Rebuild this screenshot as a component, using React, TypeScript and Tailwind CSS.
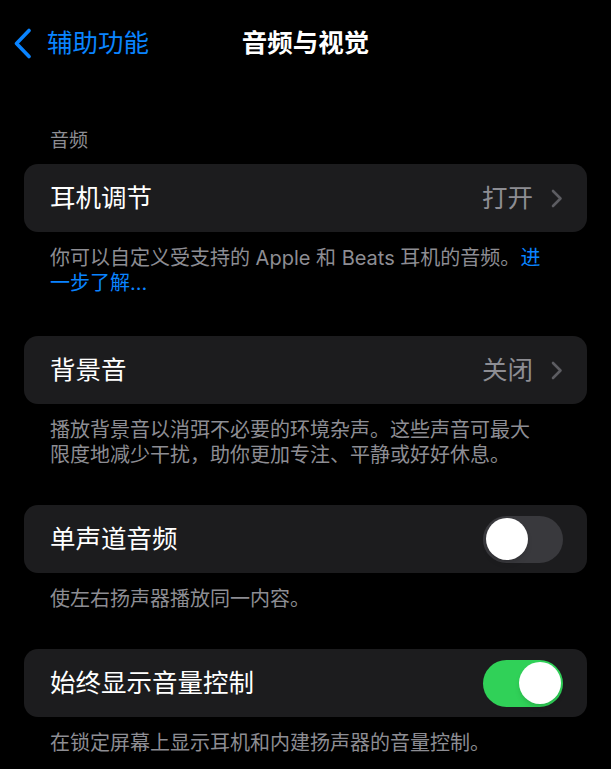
import { useState } from 'react'

const font = { fontFamily: 'Inter, "Noto Sans CJK SC", sans-serif' }

function BackChevron() {
  return (
    <svg width="19" height="31" viewBox="0 0 19 31" fill="none">
      <path d="M16 2.5L3.5 15.5L16 28.5" stroke="#0a84ff" strokeWidth="3.6" strokeLinecap="round" strokeLinejoin="round" />
    </svg>
  )
}

function RowChevron() {
  return (
    <svg width="12" height="19" viewBox="0 0 12 19" fill="none">
      <path d="M2 2L9.5 9.5L2 17" stroke="#5c5c61" strokeWidth="2.6" strokeLinecap="round" strokeLinejoin="round" />
    </svg>
  )
}

function Toggle({ on, onChange }: { on: boolean; onChange: () => void }) {
  return (
    <button
      onClick={onChange}
      className={`w-[80px] h-[47px] rounded-full p-[2.5px] flex items-center transition-colors ${
        on ? 'bg-[#30d158] justify-end' : 'bg-[#39393d] justify-start'
      }`}
    >
      <span className="w-[42px] h-[42px] rounded-full bg-white shadow-md" />
    </button>
  )
}

function Footer({ children }: { children: React.ReactNode }) {
  return (
    <p className="mt-[14px] pl-[26px] pr-[40px] text-[20px] leading-[25px] text-[#8d8d93]">{children}</p>
  )
}

export default function App() {
  const [mono, setMono] = useState(false)
  const [alwaysVolume, setAlwaysVolume] = useState(true)

  return (
    <div className="min-h-screen bg-black text-white" style={font}>
      {/* 导航栏 */}
      <div className="h-[86px] grid grid-cols-[1fr_auto_1fr] items-center">
        <button className="flex items-center gap-[15px] pl-[13px] text-[#0a84ff] text-[25.5px]">
          <BackChevron />
          <span>辅助功能</span>
        </button>
        <h1 className="text-[25.5px] font-semibold">音频与视觉</h1>
        <div />
      </div>

      <div className="px-[24px]">
        <div className="mt-[43px] mb-[11px] px-[26px] text-[19px] leading-[24px] text-[#8d8d93]">音频</div>

        <div className="h-[68px] rounded-[14px] bg-[#1c1c1e] flex items-center justify-between pl-[26px] pr-[24px]">
          <span className="text-[25.5px]">耳机调节</span>
          <div className="flex items-center gap-[18px]">
            <span className="text-[25.5px] text-[#8d8d93]">打开</span>
            <RowChevron />
          </div>
        </div>
        <Footer>
          你可以自定义受支持的 Apple 和 Beats 耳机的音频。<span className="text-[#0a84ff]">进一步了解…</span>
        </Footer>

        <div className="mt-[40px] h-[68px] rounded-[14px] bg-[#1c1c1e] flex items-center justify-between pl-[26px] pr-[24px]">
          <span className="text-[25.5px]">背景音</span>
          <div className="flex items-center gap-[18px]">
            <span className="text-[25.5px] text-[#8d8d93]">关闭</span>
            <RowChevron />
          </div>
        </div>
        <Footer>播放背景音以消弭不必要的环境杂声。这些声音可最大限度地减少干扰，助你更加专注、平静或好好休息。</Footer>

        <div className="mt-[37px] h-[68px] rounded-[14px] bg-[#1c1c1e] flex items-center justify-between pl-[26px] pr-[24px]">
          <span className="text-[25.5px]">单声道音频</span>
          <Toggle on={mono} onChange={() => setMono(!mono)} />
        </div>
        <Footer>使左右扬声器播放同一内容。</Footer>

        <div className="mt-[37px] h-[68px] rounded-[14px] bg-[#1c1c1e] flex items-center justify-between pl-[26px] pr-[24px]">
          <span className="text-[25.5px]">始终显示音量控制</span>
          <Toggle on={alwaysVolume} onChange={() => setAlwaysVolume(!alwaysVolume)} />
        </div>
        <Footer>在锁定屏幕上显示耳机和内建扬声器的音量控制。</Footer>
      </div>
    </div>
  )
}
